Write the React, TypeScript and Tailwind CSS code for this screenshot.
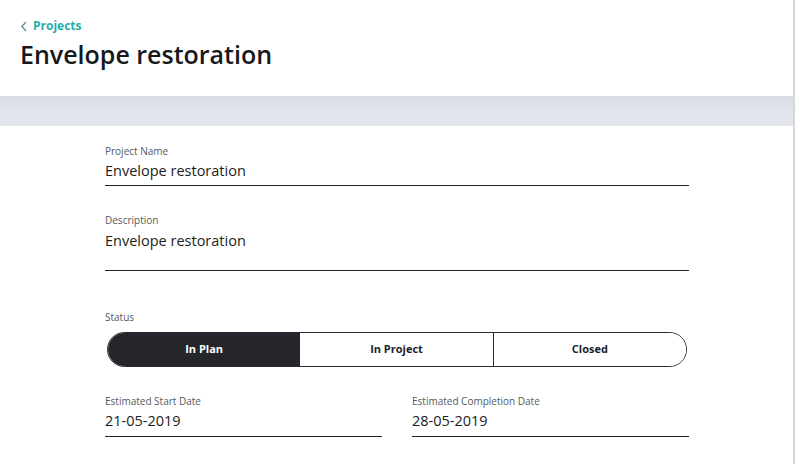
import React from "react";

const font = { fontFamily: '"Open Sans", "Noto Sans", sans-serif' };

function Field({ label, value, boxH }: { label: string; value: string; boxH: string }) {
  return (
    <div className="flex flex-col">
      <span className="text-[10px] leading-[14px] text-[#555a60]">{label}</span>
      <div className={`border-b border-[#222326] text-[14.5px] leading-[20px] text-[#1c1d21] ${boxH}`}>
        {value}
      </div>
    </div>
  );
}

export default function App() {
  const segments = ["In Plan", "In Project", "Closed"];
  return (
    <div className="relative w-[795px] h-[464px] overflow-hidden bg-white" style={font}>
      <header className="h-[96px] bg-white px-[20px] pt-[17px]">
        <a className="flex items-center gap-[5px] text-[12px] font-bold text-[#1fb0ae]">
          <svg width="8" height="11" viewBox="0 0 8 11" fill="none">
            <path d="M6 1L1.8 5.5L6 10" stroke="#4a8f93" strokeWidth="1.2" />
          </svg>
          Projects
        </a>
        <h1 className="mt-[2px] text-[25px] leading-[34px] font-semibold text-[#17181c]">Envelope restoration</h1>
      </header>
      <div className="h-[30px] bg-gradient-to-b from-[#d9dbe4] via-[#e2e4ec] to-[#e4e6ee]" />
      <main className="w-[584px] ml-[105px] pt-[18px] flex flex-col">
        <Field label="Project Name" value="Envelope restoration" boxH="h-[28px] pt-[3px]" />
        <div className="h-[27px]" />
        <Field label="Description" value="Envelope restoration" boxH="h-[44px] pt-[4px]" />
        <div className="h-[39px]" />
        <span className="text-[10px] leading-[14px] text-[#555a60]">Status</span>
        <div className="mt-[8px] ml-[2px] mr-[2px] flex h-[35px] rounded-full border border-[#2a2b30] overflow-hidden">
          {segments.map((s, i) => (
            <div
              key={s}
              className={`flex-1 flex items-center justify-center text-[11px] font-bold ${
                i === 0 ? "bg-[#25262b] text-white" : "bg-white text-[#1c1f2a]"
              } ${i === 2 ? "border-l border-[#2a2b30]" : ""}`}
            >
              {s}
            </div>
          ))}
        </div>
        <div className="mt-[27px] grid grid-cols-[277px_277px] gap-x-[30px]">
          <Field label="Estimated Start Date" value="21-05-2019" boxH="h-[29px] pt-[3px]" />
          <Field label="Estimated Completion Date" value="28-05-2019" boxH="h-[29px] pt-[3px]" />
        </div>
      </main>
      <div className="absolute right-0 top-0 h-full w-[2px] bg-[#d6d6dc]" />
    </div>
  );
}
